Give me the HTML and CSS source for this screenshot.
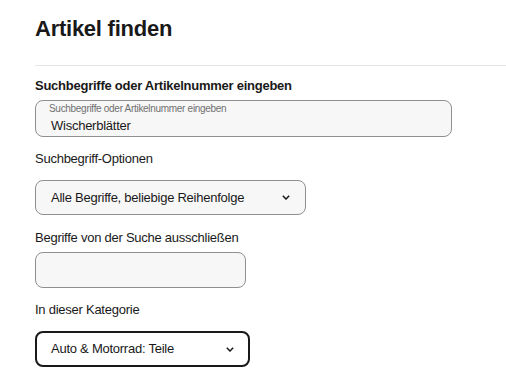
FILE: index.html
```html
<!DOCTYPE html>
<html lang="de">
<head>
<meta charset="utf-8">
<title>Artikel finden</title>
<link rel="stylesheet" href="styles.css">
</head>
<body>
<main class="page">
  <h1 class="title">Artikel finden</h1>
  <hr class="divider">
  <form class="form">
    <label class="label label-bold" for="q">Suchbegriffe oder Artikelnummer eingeben</label>
    <div class="field field-wide gap-input">
      <span class="float-label">Suchbegriffe oder Artikelnummer eingeben</span>
      <span class="field-value" id="q">Wischerblätter</span>
    </div>

    <span class="label label-next">Suchbegriff-Optionen</span>
    <div class="select select-opts gap-select">
      <span class="select-text">Alle Begriffe, beliebige Reihenfolge</span>
      <svg class="chev" width="8" height="5" viewBox="0 0 8 5"><path d="M0.8 0.8 L4 4 L7.2 0.8" fill="none" stroke="#191919" stroke-width="1.5"/></svg>
    </div>

    <span class="label label-next2">Begriffe von der Suche ausschließen</span>
    <div class="field field-empty gap-input"></div>

    <span class="label label-next">In dieser Kategorie</span>
    <div class="select select-cat gap-select">
      <span class="select-text">Auto &amp; Motorrad: Teile</span>
      <svg class="chev" width="8" height="5" viewBox="0 0 8 5"><path d="M0.8 0.8 L4 4 L7.2 0.8" fill="none" stroke="#191919" stroke-width="1.5"/></svg>
    </div>
  </form>
</main>
</body>
</html>
```
FILE: styles.css
```css
html, body {
  margin: 0;
  padding: 0;
  background: #ffffff;
}
body {
  font-family: "Liberation Sans", Arial, sans-serif;
  color: #191919;
}
.page {
  padding: 16px 0 0 35px;
}
.title {
  margin: 0;
  font-size: 22px;
  line-height: 26px;
  font-weight: 700;
  letter-spacing: -0.25px;
  color: #191919;
}
.divider {
  margin: 23px 0 0 0;
  border: 0;
  height: 1px;
  background: #e5e5e5;
}
.form {
  display: flex;
  flex-direction: column;
  align-items: flex-start;
  padding-top: 12px;
}
.label {
  display: block;
  font-size: 13px;
  line-height: 16px;
  letter-spacing: -0.25px;
  color: #191919;
}
.label-bold {
  font-weight: 700;
}
.label-next {
  margin-top: 14px;
}
.label-next2 {
  margin-top: 15px;
}
.gap-input {
  margin-top: 6px;
}
.gap-select {
  margin-top: 13px;
}
.field {
  box-sizing: border-box;
  border: 1px solid #8f8f8f;
  border-radius: 8px;
  background: #f7f7f7;
}
.field-wide {
  width: 417px;
  height: 37px;
  padding: 2px 15px 0 13px;
  display: flex;
  flex-direction: column;
}
.float-label {
  font-size: 10px;
  line-height: 11px;
  letter-spacing: -0.3px;
  color: #707070;
  white-space: nowrap;
}
.field-value {
  margin-top: 3px;
  padding-left: 2px;
  font-size: 13px;
  line-height: 17px;
  letter-spacing: -0.25px;
  color: #191919;
}
.field-empty {
  width: 211px;
  height: 36px;
}
.select {
  box-sizing: border-box;
  display: flex;
  align-items: center;
  justify-content: space-between;
  border-radius: 8px;
  font-size: 13px;
  line-height: 16px;
  letter-spacing: -0.25px;
}
.select-opts {
  width: 271px;
  height: 35px;
  border: 1px solid #8f8f8f;
  background: #f7f7f7;
  padding: 0 15px 0 15px;
}
.select-cat {
  width: 215px;
  height: 36px;
  border: 2px solid #191919;
  background: #ffffff;
  padding: 0 14px 0 14px;
}
.select-text {
  white-space: nowrap;
}
.chev {
  display: block;
  flex: none;
}
```
